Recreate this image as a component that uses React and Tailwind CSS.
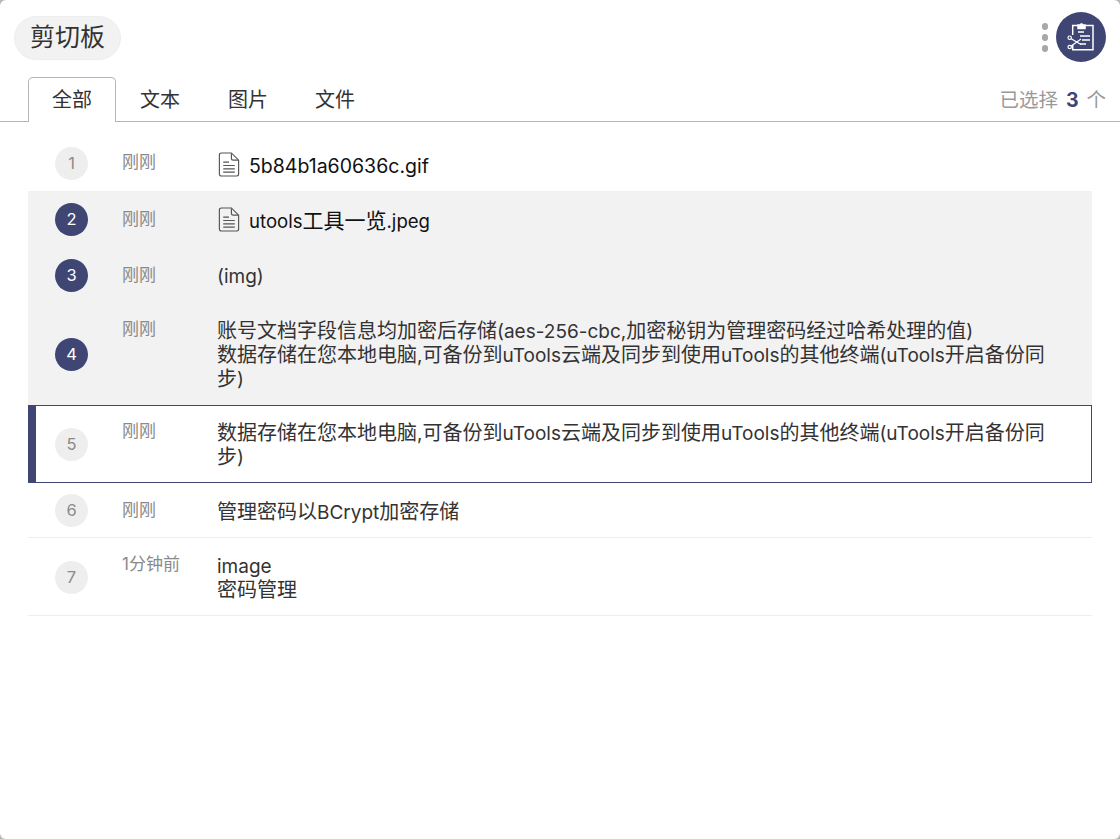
import React from 'react';

function FileIcon() {
  return (
    <svg width="22" height="25" viewBox="0 0 22 26" fill="none" stroke="#555" strokeWidth="1.2" className="shrink-0 ml-px">
      <path d="M3 1h10.5L21 8.5V23a2 2 0 0 1-2 2H3a2 2 0 0 1-2-2V3a2 2 0 0 1 2-2z" />
      <path d="M13.5 1.5V6.5a2 2 0 0 0 2 2H20.5" />
      <path d="M5 10.5h6M5 14h12M5 17.5h12M5 21h12" />
    </svg>
  );
}

function ClipScissors() {
  return (
    <svg width="28" height="28" viewBox="0 0 28 28" fill="none" stroke="#fff" strokeWidth="1.5">
      <path d="M11 2.5H5.7v9.5M5.7 22v4.7H26V2.5h-8" />
      <path d="M11 5.5V2h2.2a1.4 1.4 0 0 1 2.6 0H18v3.5z" fill="#fff" />
      <path d="M11 9h6M13 13h10M15 17h8M13 21h6" />
      <circle cx="2.7" cy="14.7" r="1.7" strokeWidth="1.2" />
      <circle cx="2.7" cy="24" r="1.7" strokeWidth="1.2" />
      <path d="M4.2 15.7 14 21.5M4.2 23 14 16" strokeWidth="1.2" />
    </svg>
  );
}

// latin runs sit a bit smaller than the CJK around them
function Mixed({ text, latin = 'text-[19px] leading-[16px]' }) {
  return text.split(/([\x00-\x7f]+)/).map((part, i) =>
    i % 2 ? <span key={i} className={latin}>{part}</span> : part
  );
}

function Badge({ n, on }) {
  return (
    <div className={on
      ? 'w-[33px] h-[33px] rounded-full bg-[#3f4674] text-white flex items-center justify-center text-[16.5px] shrink-0'
      : 'w-[33px] h-[33px] rounded-full bg-[#eeeeee] text-[#8a8a8a] flex items-center justify-center text-[16.5px] shrink-0'}>
      {n}
    </div>
  );
}

function Row({ n, time, on, active, file, line, nudge, timePad, textPad, children }) {
  let cls = 'flex items-stretch';
  if (on) cls = 'flex items-stretch bg-[#f2f2f2]';
  if (line) cls = 'flex items-stretch border-b border-[#eeeeee]';
  if (active) cls = 'flex items-stretch border border-l-[8px] border-[#3f4674] bg-white';
  return (
    <div className={cls}>
      <div className={(active ? 'w-[86px] pl-[19px] flex items-center shrink-0' : 'w-[94px] pl-[27px] flex items-center shrink-0') + (nudge ? ' pt-px' : '')}>
        <Badge n={n} on={on} />
      </div>
      <div className={'w-[95px] shrink-0 text-[17px] leading-[20px] text-[#8a8a8a] ' + timePad}>
        {time}
      </div>
      {file ? (
        <div className={'flex-1 pr-[46px] flex items-start gap-[9px] text-[21px] leading-[24px] text-[#111111] ' + textPad}>
          <FileIcon />
          <div className="mt-[2px] h-[23px]">{children}</div>
        </div>
      ) : (
        <div className={'flex-1 pr-[46px] text-[20px] leading-[24px] text-[#333333] ' + textPad}>
          {children}
        </div>
      )}
    </div>
  );
}

export default function App() {
  return (
    <div className="w-[1120px] h-[839px] bg-[#b8b8b8]">
      <div className="w-[1120px] h-[839px] bg-white rounded-[6px] overflow-hidden font-['Inter','Noto_Sans_CJK_SC',sans-serif]">
        <div className="h-[77px] flex items-start justify-between pl-[14px] pr-[14px] pt-[12px]">
          <div className="mt-[4px] h-[44px] px-[15px] rounded-[22px] bg-[#f2f2f2] border border-[#eeeeee] flex items-center text-[25px] text-[#333333]">
            剪切板
          </div>
          <div className="flex items-center gap-[8px]">
            <div className="flex flex-col gap-[4.5px] mt-[1px]">
              <span className="w-[6.5px] h-[6.5px] rounded-full bg-[#a8a8a8]" />
              <span className="w-[6.5px] h-[6.5px] rounded-full bg-[#a8a8a8]" />
              <span className="w-[6.5px] h-[6.5px] rounded-full bg-[#a8a8a8]" />
            </div>
            <div className="w-[50px] h-[50px] rounded-full bg-[#3f4674] flex items-center justify-center">
              <ClipScissors />
            </div>
          </div>
        </div>

        <div className="h-[45px] flex items-end justify-between border-b border-[#b5b5b5] pl-[28px] pr-[14px]">
          <div className="flex items-end text-[20px] text-[#333333]">
            <div className="w-[88px] h-[45px] -mb-px border border-b-0 border-[#b5b5b5] rounded-t-[5px] bg-white flex items-center justify-center">全部</div>
            <div className="w-[88px] h-[44px] pt-[2px] flex items-center justify-center">文本</div>
            <div className="w-[88px] h-[44px] pt-[2px] flex items-center justify-center">图片</div>
            <div className="w-[86px] h-[44px] pt-[2px] flex items-center justify-center">文件</div>
          </div>
          <div className="h-[44px] pt-[3px] flex items-center text-[19.5px] text-[#999999]">
            已选择
            <span className="ml-[8px] mr-[8px] font-bold text-[#3f4674]">3</span>
            个
          </div>
        </div>

        <div className="mx-[28px] mt-[14px]">
          <Row n={1} time="刚刚" file timePad="pt-[16px]" textPad="pt-[16px] pb-[14px]">
            <span className="text-[19.5px]">5b84b1a60636c.gif</span>
          </Row>
          <Row n={2} time="刚刚" on file nudge timePad="pt-[18px]" textPad="pt-[16px] pb-[15px]">
            <Mixed text="utools工具一览.jpeg" latin="text-[18.6px] leading-[16px]" />
          </Row>
          <Row n={3} time="刚刚" on nudge timePad="pt-[18px]" textPad="pt-[17px] pb-[15px]"><Mixed text="(img)" /></Row>
          <Row n={4} time="刚刚" on timePad="pt-[16px]" textPad="pt-[16px] pb-[14px]">
            <Mixed text="账号文档字段信息均加密后存储(aes-256-cbc,加密秘钥为管理密码经过哈希处理的值)" />
            <br />
            <Mixed text="数据存储在您本地电脑,可备份到uTools云端及同步到使用uTools的其他终端(uTools开启备份同步)" />
          </Row>
          <Row n={5} time="刚刚" active timePad="pt-[15px]" textPad="pt-[15px] pb-[13px]">
            <Mixed text="数据存储在您本地电脑,可备份到uTools云端及同步到使用uTools的其他终端(uTools开启备份同步)" />
          </Row>
          <Row n={6} time="刚刚" line nudge timePad="pt-[17px]" textPad="pt-[17px] pb-[13px]"><Mixed text="管理密码以BCrypt加密存储" /></Row>
          <Row n={7} time="1分钟前" line nudge timePad="pt-[16px]" textPad="pt-[16px] pb-[13px]">
            <Mixed text="image" />
            <br />
            密码管理
          </Row>
        </div>
      </div>
    </div>
  );
}
